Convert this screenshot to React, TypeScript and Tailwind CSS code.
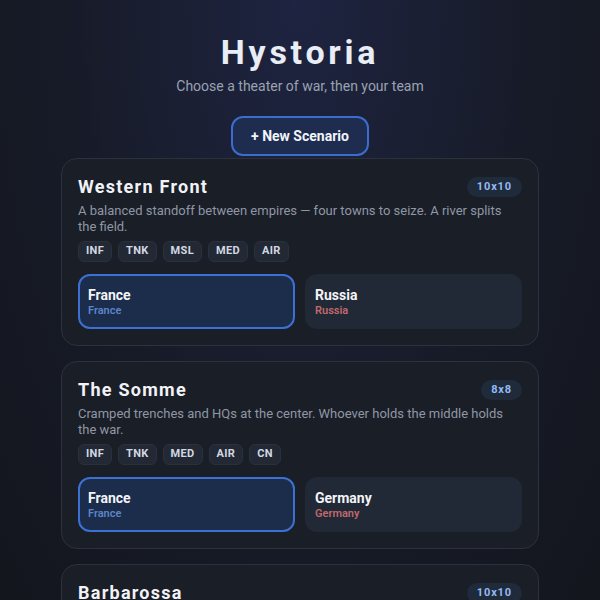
type Team = { name: string; side: "blue" | "red" };

type Scenario = {
  title: string;
  size: string;
  description: string;
  units: string[];
  teams: Team[];
};

const scenarios: Scenario[] = [
  {
    title: "Western Front",
    size: "10x10",
    description:
      "A balanced standoff between empires — four towns to seize. A river splits the field.",
    units: ["INF", "TNK", "MSL", "MED", "AIR"],
    teams: [
      { name: "France", side: "blue" },
      { name: "Russia", side: "red" },
    ],
  },
  {
    title: "The Somme",
    size: "8x8",
    description:
      "Cramped trenches and HQs at the center. Whoever holds the middle holds the war.",
    units: ["INF", "TNK", "MED", "AIR", "CN"],
    teams: [
      { name: "France", side: "blue" },
      { name: "Germany", side: "red" },
    ],
  },
  {
    title: "Barbarossa",
    size: "10x10",
    description:
      "A long frozen front stretching east. Supply lines decide who survives the winter.",
    units: ["INF", "TNK", "AIR", "CN"],
    teams: [
      { name: "Germany", side: "blue" },
      { name: "Russia", side: "red" },
    ],
  },
];

function ScenarioCard({ scenario }: { scenario: Scenario }) {
  return (
    <div className="rounded-2xl border border-[#2b313d] bg-[#1a1e27] p-4">
      <div className="flex items-center justify-between">
        <h2 className="text-[18px] font-bold leading-6 tracking-[0.07em] text-[#f1f3f7]">
          {scenario.title}
        </h2>
        <span className="rounded-full bg-[#1f2a3b] px-[10px] py-[2px] text-[11px] font-bold tracking-[0.08em] text-[#93bbf2]">
          {scenario.size}
        </span>
      </div>
      <p className="mt-1 text-[13px] leading-4 text-[#8f97a5]">{scenario.description}</p>
      <div className="mt-[6px] flex gap-[6px]">
        {scenario.units.map((u) => (
          <span
            key={u}
            className="flex h-[21px] items-center rounded-md border border-[#2a313d] bg-[#222834] px-[7px] text-[11px] font-bold tracking-[0.03em] text-[#d2d8e2]"
          >
            {u}
          </span>
        ))}
      </div>
      <div className="mt-3 grid grid-cols-2 gap-[10px]">
        {scenario.teams.map((t, i) => {
          const selected = i === 0;
          return (
            <div
              key={t.name}
              className={
                selected
                  ? "flex h-[55px] flex-col justify-center rounded-xl border-2 border-[#3c70d2] bg-[#1c2c4b] px-2"
                  : "flex h-[55px] flex-col justify-center rounded-xl border-2 border-transparent bg-[#212836] px-2"
              }
            >
              <span className="text-[14px] font-bold leading-[18px] text-[#f2f4f8]">{t.name}</span>
              <span
                className={
                  t.side === "blue"
                    ? "text-[11px] font-semibold leading-[14px] text-[#5a85c8]"
                    : "text-[11px] font-semibold leading-[14px] text-[#c0686d]"
                }
              >
                {t.name}
              </span>
            </div>
          );
        })}
      </div>
    </div>
  );
}

export default function App() {
  return (
    <div
      className="h-screen overflow-hidden bg-[radial-gradient(ellipse_at_top,#1e2441_0%,#171b28_55%,#13161d_100%)] pt-8"
      style={{ fontFamily: "Roboto, 'Noto Sans', sans-serif" }}
    >
      <div className="flex flex-col items-center">
        <h1 className="text-[34px] font-bold leading-10 tracking-[0.11em] text-[#e9edf5]">
          Hystoria
        </h1>
        <p className="mt-1 text-[14px] leading-5 text-[#9aa2b2]">
          Choose a theater of war, then your team
        </p>
        <button className="mt-5 h-10 w-[138px] rounded-xl border-2 border-[#3b6dcc] bg-[#1d2c4f] text-[14px] font-bold text-[#f1f4f9]">
          + New Scenario
        </button>
      </div>
      <div className="mx-auto mt-[2px] flex w-[478px] flex-col gap-[15px]">
        {scenarios.map((s) => (
          <ScenarioCard key={s.title} scenario={s} />
        ))}
      </div>
    </div>
  );
}
